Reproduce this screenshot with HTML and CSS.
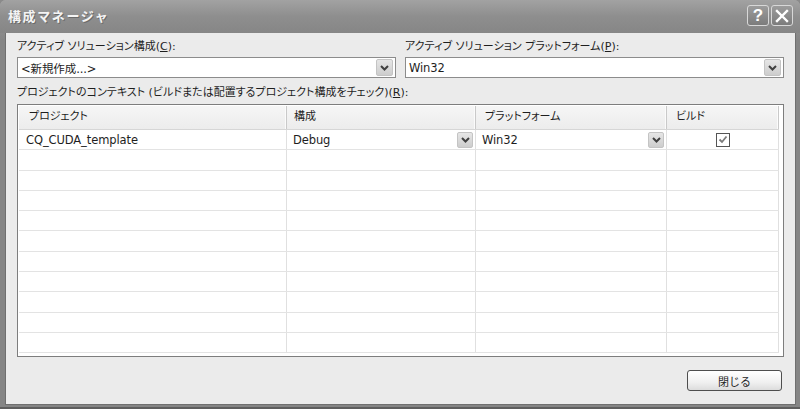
FILE: index.html
```html
<!DOCTYPE html>
<html lang="ja">
<head>
<meta charset="utf-8">
<title>構成マネージャ</title>
<link rel="stylesheet" href="styles.css">
</head>
<body>
<div class="window">
  <div class="titlebar">
    <span class="title">構成マネージャ</span>
    <div class="tbtns">
      <span class="tbtn">?</span>
      <span class="tbtn"><svg width="14" height="14" viewBox="0 0 14 14"><path d="M2 2 L12 12 M12 2 L2 12" stroke="#fff" stroke-width="2.4" stroke-linecap="square"/></svg></span>
    </div>
  </div>
  <div class="body">
    <div class="top">
      <div class="field">
        <label class="lbl">アクティブ ソリューション構成(<u>C</u>):</label>
        <div class="combo"><span class="val">&lt;新規作成...&gt;</span><span class="arrow"><svg width="9" height="6" viewBox="0 0 9 6"><path d="M1 1 L4.5 4.5 L8 1" fill="none" stroke="#404040" stroke-width="2"/></svg></span></div>
      </div>
      <div class="field">
        <label class="lbl">アクティブ ソリューション プラットフォーム(<u>P</u>):</label>
        <div class="combo"><span class="val">Win32</span><span class="arrow"><svg width="9" height="6" viewBox="0 0 9 6"><path d="M1 1 L4.5 4.5 L8 1" fill="none" stroke="#404040" stroke-width="2"/></svg></span></div>
      </div>
    </div>
    <div class="lbl ctx">プロジェクトのコンテキスト (ビルドまたは配置するプロジェクト構成をチェック)(<u>R</u>):</div>
    <div class="grid">
      <div class="hdr">
        <div class="hc">プロジェクト</div>
        <div class="hc">構成</div>
        <div class="hc">プラットフォーム</div>
        <div class="hc">ビルド</div>
      </div>
      <div class="row">
        <div class="c c1">CQ_CUDA_template</div>
        <div class="c c2"><span>Debug</span><span class="arrow sm"><svg width="9" height="6" viewBox="0 0 9 6"><path d="M1 1 L4.5 4.5 L8 1" fill="none" stroke="#404040" stroke-width="2"/></svg></span></div>
        <div class="c c3"><span>Win32</span><span class="arrow sm"><svg width="9" height="6" viewBox="0 0 9 6"><path d="M1 1 L4.5 4.5 L8 1" fill="none" stroke="#404040" stroke-width="2"/></svg></span></div>
        <div class="c c4"><span class="chk"><svg width="10" height="9" viewBox="0 0 10 9"><path d="M1.5 4.5 L4 7 L8.5 1.5" fill="none" stroke="#7a7a7a" stroke-width="1.8"/></svg></span></div>
      </div>
      <div class="row"><div class="c"></div><div class="c"></div><div class="c"></div><div class="c"></div></div>
      <div class="row"><div class="c"></div><div class="c"></div><div class="c"></div><div class="c"></div></div>
      <div class="row"><div class="c"></div><div class="c"></div><div class="c"></div><div class="c"></div></div>
      <div class="row"><div class="c"></div><div class="c"></div><div class="c"></div><div class="c"></div></div>
      <div class="row"><div class="c"></div><div class="c"></div><div class="c"></div><div class="c"></div></div>
      <div class="row"><div class="c"></div><div class="c"></div><div class="c"></div><div class="c"></div></div>
      <div class="row"><div class="c"></div><div class="c"></div><div class="c"></div><div class="c"></div></div>
      <div class="row"><div class="c"></div><div class="c"></div><div class="c"></div><div class="c"></div></div>
      <div class="row"><div class="c"></div><div class="c"></div><div class="c"></div><div class="c"></div></div>
      <div class="row"><div class="c"></div><div class="c"></div><div class="c"></div><div class="c"></div></div>
    </div>
    <div class="foot">
      <button class="btn">閉じる</button>
    </div>
  </div>
</div>
</body>
</html>
```
FILE: styles.css
```css
* { box-sizing: border-box; }
html, body { margin: 0; padding: 0; }
body {
  width: 800px;
  height: 409px;
  overflow: hidden;
  background: #8a8a8a;
  font-family: "DejaVu Sans", "Noto Sans CJK JP", sans-serif;
  color: #1e1e1e;
}
.window {
  width: 800px;
  height: 409px;
  display: flex;
  flex-direction: column;
  background: linear-gradient(#a4a4a4, #858585 40px);
  border-radius: 6px 6px 0 0;
  border-bottom: 2px solid #5e5e5e;
}
.titlebar {
  height: 33px;
  flex: none;
  display: flex;
  align-items: center;
  justify-content: space-between;
  padding: 0 7px 2px 8px;
  background: linear-gradient(#a2a2a2, #8e8e8e 50%, #868686);
  border-radius: 6px 6px 0 0;
}
.title {
  font-family: "Noto Sans CJK JP", sans-serif;
  font-size: 13px;
  font-weight: bold;
  letter-spacing: 1.6px;
  color: #f4f4f4;
  text-shadow: 1px 1px 0 #6a6a6a;
}
.tbtns { display: flex; gap: 2px; }
.tbtn {
  width: 22px;
  height: 21px;
  display: flex;
  align-items: center;
  justify-content: center;
  border: 1px solid #d8d8d8;
  border-radius: 3px;
  background: linear-gradient(#9c9c9c, #7c7c7c);
  color: #fff;
  font-family: "Liberation Sans", sans-serif;
  font-weight: bold;
  font-size: 17px;
}
.body {
  flex: 1;
  margin: 0 4px 2px 5px;
  background: #ebebeb;
  border-left: 1px solid #6f6f6f;
  border-right: 1px solid #6f6f6f;
  border-bottom: 1px solid #6f6f6f;
  padding: 7px 11px 12px 11px;
  display: flex;
  flex-direction: column;
}
.top {
  display: grid;
  grid-template-columns: 1fr 1fr;
  gap: 9px;
}
.field { display: flex; flex-direction: column; }
.lbl {
  font-size: 11px;
  line-height: 14px;
  height: 14px;
  letter-spacing: 0;
  font-feature-settings: "palt" 1;
  white-space: nowrap;
}
.lbl u { text-underline-offset: 1px; }
.combo {
  margin-top: 3px;
  height: 21px;
  border: 1px solid #8c8c8c;
  background: #fff;
  display: flex;
  align-items: center;
  justify-content: space-between;
  padding: 0 2px 0 3px;
}
.val { font-size: 11.5px; letter-spacing: -0.1px; }
.arrow {
  width: 17px;
  height: 17px;
  display: flex;
  align-items: center;
  justify-content: center;
  border-radius: 2px;
  background: linear-gradient(#e6e6e6, #cdcdcd);
  border: 1px solid #c4c4c4;
}
.arrow.sm { width: 16px; height: 16px; }
.ctx { margin-top: 8px; }
.grid {
  margin-top: 4px;
  height: 253px;
  flex: none;
  border: 1px solid #7d7d7d;
  background: #fff;
  padding: 1px 4px 0 1px;
  overflow: hidden;
}
.hdr, .row {
  display: grid;
  grid-template-columns: 268px 189px 191px 112px;
}
.hdr {
  height: 24px;
  background: linear-gradient(#f6f6f6, #ececec);
  border-bottom: 1px solid #d6d6d6;
}
.hc {
  font-size: 11px;
  line-height: 22px;
  padding-left: 10px;
  border-right: 1px solid #c9c9c9;
  box-shadow: inset -1px 0 0 #fbfbfb;
  font-feature-settings: "palt" 1;
}
.hc:nth-child(2) { padding-left: 7px; }
.hc:nth-child(3) { padding-left: 9px; }
.hc:nth-child(4) { padding-left: 9px; }
.row {
  height: 20.3px;
  border-bottom: 1px solid #e3e3e3;
}
.c {
  border-right: 1px solid #e0e0e0;
  font-size: 11.5px;
  letter-spacing: -0.1px;
  display: flex;
  align-items: center;
  justify-content: space-between;
  padding: 0 2px 0 7px;
}
.c4 { justify-content: center; padding: 0 0 0 1px; }
.c2 { padding-left: 6px; }
.c3 { padding-left: 6px; }
.chk {
  width: 14px;
  height: 14px;
  border: 1px solid #555;
  background: #fff;
  display: flex;
  align-items: center;
  justify-content: center;
}
.foot {
  display: flex;
  justify-content: flex-end;
  margin-top: 13px;
  padding-right: 2px;
}
.btn {
  width: 95px;
  height: 21px;
  border: 1px solid #4e4e4e;
  border-radius: 3px;
  background: linear-gradient(#ffffff, #f0f0f0 60%, #dcdcdc);
  font-family: "Noto Sans CJK JP", sans-serif;
  font-size: 11px;
  color: #1e1e1e;
  padding: 0;
  line-height: 18px;
}
```
